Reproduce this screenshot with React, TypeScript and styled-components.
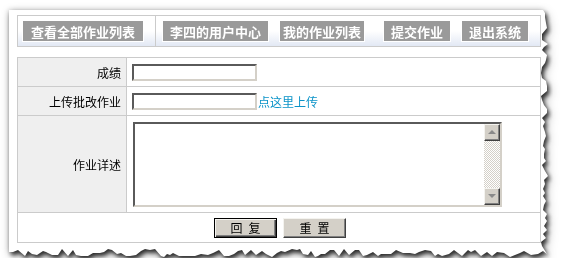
import styled, { createGlobalStyle } from "styled-components";

const GlobalStyle = createGlobalStyle`
  html, body {
    margin: 0;
    padding: 0;
    background: #fff;
  }
  body {
    font-family: "Noto Sans CJK SC", "Liberation Sans", sans-serif;
    font-size: 12px;
  }
`;

const PAPER_W = 540;
const PAPER_H = 248;

// torn edge on the right and bottom
const tornEdge = () => {
  let seed = 7;
  const rnd = () => {
    seed = (seed * 1103515245 + 12345) % 2147483648;
    return seed / 2147483648;
  };
  const pts: string[] = ["0px 0px", `${PAPER_W - 6}px 0px`];
  for (let y = 3; y < PAPER_H - 8; y += 3 + Math.round(rnd() * 3)) {
    pts.push(`${PAPER_W - 8 + Math.round(rnd() * 7)}px ${y}px`);
  }
  pts.push(`${PAPER_W - 2}px ${PAPER_H - 4}px`);
  for (let x = PAPER_W - 6; x > 2; x -= 3 + Math.round(rnd() * 4)) {
    pts.push(`${x}px ${PAPER_H - 9 + Math.round(rnd() * 8)}px`);
  }
  pts.push(`0px ${PAPER_H - 6}px`);
  return `polygon(${pts.join(", ")})`;
};

const Page = styled.div`
  padding: 10px 0 0 9px;
`;

const Shadow = styled.div`
  width: ${PAPER_W}px;
  filter: drop-shadow(2px 3px 2px rgba(0, 0, 0, 0.75))
    drop-shadow(1px 2px 4px rgba(0, 0, 0, 0.3))
    drop-shadow(-1px -1px 2px rgba(0, 0, 0, 0.1));
`;

const Paper = styled.div`
  width: ${PAPER_W}px;
  height: ${PAPER_H}px;
  box-sizing: border-box;
  padding: 5px 0 0 8px;
  background: #fff;
`;

const Content = styled.div`
  width: 524px;
  display: flex;
  flex-direction: column;
  gap: 10px;
`;

const Nav = styled.div`
  display: flex;
  align-items: stretch;
  height: 30px;
  border: 1px solid #cbcbcb;
  background: linear-gradient(to bottom, #fff 0%, #fff 50%, #e2e8f4 100%);
`;

const NavCell = styled.div`
  display: flex;
  align-items: center;
  padding: 0 11px 0 4px;
  border-right: 1px solid #cbcbcb;
`;

const NavButtons = styled.div`
  display: flex;
  align-items: center;
  padding-left: 6px;
`;

const NavButton = styled.a<{ $w: number; $gap?: number }>`
  box-sizing: border-box;
  width: ${(p) => p.$w}px;
  height: 22px;
  margin-left: ${(p) => p.$gap ?? 0}px;
  display: flex;
  align-items: center;
  justify-content: center;
  background: #9a9a9a;
  border: 1px solid #fff;
  color: #fff;
  font-weight: bold;
  font-size: 13px;
  cursor: pointer;
`;

const Table = styled.table`
  width: 524px;
  border-collapse: collapse;
  font-size: 12px;
  color: #000;

  td {
    border: 1px solid #cbcbcb;
    padding: 0;
  }
`;

const Label = styled.td`
  width: 103px;
  background: #efefef;
  text-align: right;
  padding-right: 5px !important;
`;

const Field = styled.td<{ $h: number }>`
  height: ${(p) => p.$h}px;
  padding-left: 5px !important;
`;

const FieldLine = styled.div`
  display: flex;
  align-items: center;
`;

const TextInput = styled.input`
  box-sizing: border-box;
  width: 125px;
  height: 17px;
  margin: 0;
  padding: 0 2px;
  border: 2px solid;
  border-color: #5a5a5a #d4d0c8 #d4d0c8 #5a5a5a;
  background: #fff;
  font-size: 12px;
  outline: none;
`;

const UploadLink = styled.a`
  color: #0b93c8;
  text-decoration: none;
  cursor: pointer;
  margin-left: 1px;
`;

const TextBox = styled.div`
  box-sizing: border-box;
  width: 369px;
  height: 85px;
  margin-left: 1px;
  display: flex;
  border: 2px solid;
  border-color: #5a5a5a #d4d0c8 #d4d0c8 #5a5a5a;
  background: #fff;
`;

const Area = styled.textarea`
  flex: 1;
  border: none;
  resize: none;
  outline: none;
  margin: 0;
  padding: 2px;
  font-size: 12px;
  background: transparent;
  overflow: hidden;
`;

const ScrollBar = styled.div`
  width: 16px;
  display: flex;
  flex-direction: column;
`;

const ScrollTrack = styled.div`
  flex: 1;
  background: repeating-conic-gradient(#d4d0c8 0 25%, #fff 0 50%) 0 0 / 2px
    2px;
`;

const ScrollArrow = styled.div<{ $down?: boolean }>`
  box-sizing: border-box;
  height: 17px;
  display: flex;
  align-items: center;
  justify-content: center;
  background: #d4d0c8;
  border: 1px solid;
  border-color: #f4f3ef #404040 #404040 #f4f3ef;
  box-shadow: inset -1px -1px #808080;

  &::after {
    content: "";
    width: 0;
    height: 0;
    border-left: 4px solid transparent;
    border-right: 4px solid transparent;
    ${(p) =>
      p.$down
        ? "border-top: 4px solid #8a8a8a;"
        : "border-bottom: 4px solid #8a8a8a;"}
  }
`;

const ActionCell = styled.td`
  height: 29px;
  text-align: center;
`;

const Actions = styled.div`
  display: flex;
  justify-content: center;
  gap: 6px;
  padding-left: 2px;
`;

const FormButton = styled.button<{ $default?: boolean }>`
  box-sizing: border-box;
  width: 63px;
  height: 20px;
  margin: 0;
  padding: 0 0 0 6px;
  background: #d4d0c8;
  font-family: "Noto Sans CJK SC", sans-serif;
  font-size: 12px;
  letter-spacing: 6px;
  color: #000;
  border: 1px solid;
  border-color: ${(p) =>
    p.$default ? "#000" : "#f4f3ef #404040 #404040 #f4f3ef"};
  box-shadow: ${(p) =>
    p.$default
      ? "inset 1px 1px #f4f3ef, inset -1px -1px #404040, inset -2px -2px #808080"
      : "inset -1px -1px #808080"};
`;

const App = () => {
  return (
    <>
      <GlobalStyle />
      <Page>
        <Shadow>
          <Paper style={{ clipPath: tornEdge() }}>
            <Content>
              <Nav>
                <NavCell>
                  <NavButton $w={122}>查看全部作业列表</NavButton>
                </NavCell>
                <NavButtons>
                  <NavButton $w={107}>李四的用户中心</NavButton>
                  <NavButton $w={86} $gap={10}>
                    我的作业列表
                  </NavButton>
                  <NavButton $w={68} $gap={18}>
                    提交作业
                  </NavButton>
                  <NavButton $w={68} $gap={10}>
                    退出系统
                  </NavButton>
                </NavButtons>
              </Nav>
              <Table>
                <tbody>
                  <tr>
                    <Label>成绩</Label>
                    <Field $h={28}>
                      <TextInput />
                    </Field>
                  </tr>
                  <tr>
                    <Label>上传批改作业</Label>
                    <Field $h={28}>
                      <FieldLine>
                        <TextInput />
                        <UploadLink>点这里上传</UploadLink>
                      </FieldLine>
                    </Field>
                  </tr>
                  <tr>
                    <Label>作业详述</Label>
                    <Field $h={96}>
                      <TextBox>
                        <Area />
                        <ScrollBar>
                          <ScrollArrow />
                          <ScrollTrack />
                          <ScrollArrow $down />
                        </ScrollBar>
                      </TextBox>
                    </Field>
                  </tr>
                  <tr>
                    <ActionCell colSpan={2}>
                      <Actions>
                        <FormButton $default>回复</FormButton>
                        <FormButton>重置</FormButton>
                      </Actions>
                    </ActionCell>
                  </tr>
                </tbody>
              </Table>
            </Content>
          </Paper>
        </Shadow>
      </Page>
    </>
  );
};

export default App;
